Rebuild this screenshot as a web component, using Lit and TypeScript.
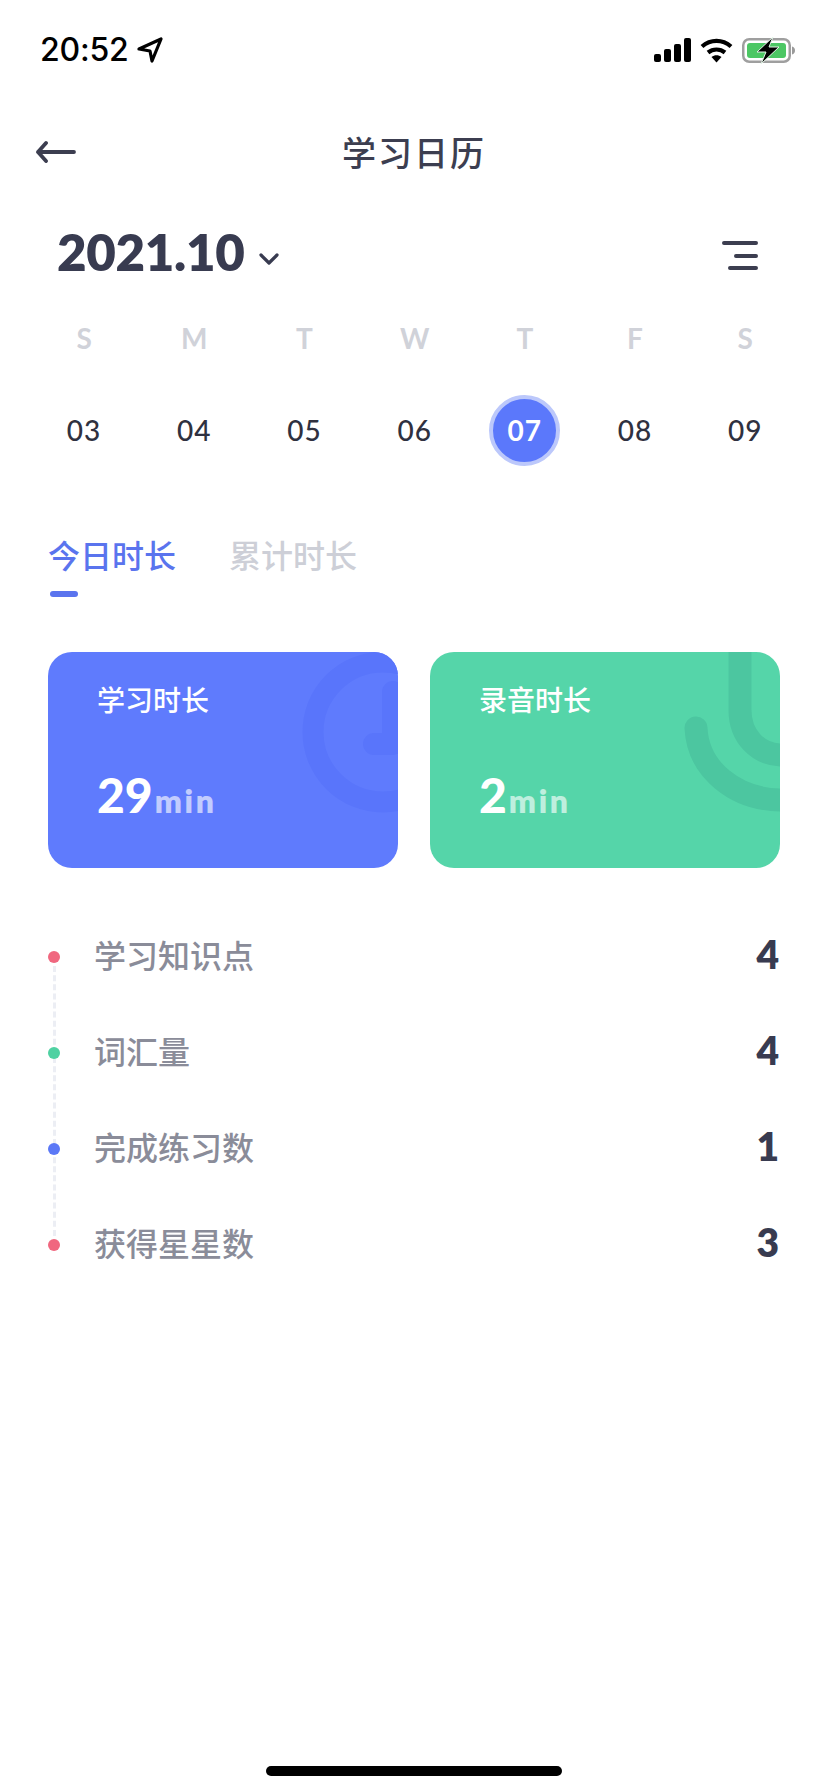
import { LitElement, html, css, svg } from "lit";
import { customElement } from "lit/decorators.js";

const WEEK = ["S", "M", "T", "W", "T", "F", "S"];
const DAYS = ["03", "04", "05", "06", "07", "08", "09"];
const STATS = [
  { label: "学习知识点", value: "4", color: "#f0677f" },
  { label: "词汇量", value: "4", color: "#4fd1a2" },
  { label: "完成练习数", value: "1", color: "#5b78f6" },
  { label: "获得星星数", value: "3", color: "#f0677f" },
];

@customElement("app-root")
export class AppRoot extends LitElement {
  static styles = css`
    :host {
      display: block;
      width: 828px;
      height: 1792px;
      background: #fff;
      font-family: "Lato", "Noto Sans CJK SC", sans-serif;
      color: #383b50;
    }
    .page { display: flex; flex-direction: column; height: 1792px; }
    .status { height: 100px; display: flex; align-items: flex-start; justify-content: space-between; padding: 28px 32px 0 40px; box-sizing: border-box; }
    .time { display: flex; align-items: center; gap: 8px; height: 44px; font: 500 32px/44px "Inter", sans-serif; color: #000; letter-spacing: -0.2px; }
    .sys { display: flex; align-items: center; gap: 9px; height: 44px; }
    svg { display: block; }
    .nav { height: 104px; display: flex; align-items: center; justify-content: center; position: relative; }
    .back { position: absolute; left: 35px; top: 39px; }
    .title { font: 500 34px/48px "Noto Sans CJK SC", sans-serif; letter-spacing: 2px; color: #3c3e50; }
    .month { height: 96px; display: flex; align-items: center; justify-content: space-between; padding: 0 70px 0 57px; }
    .month-left { display: flex; align-items: center; gap: 14px; }
    .chevron { margin-top: 14px; }
    .menu { margin-top: 8px; }
    .year { font: 800 51px/64px "Lato", sans-serif; color: #383b50; letter-spacing: -0.3px; }
    .grid { display: grid; grid-template-columns: repeat(7, 110.2px); padding-left: 29px; justify-items: center; align-items: center; }
    .week { height: 54px; margin-top: 11px; font: 700 28px/54px "Lato", sans-serif; color: #d0d2d9; }
    .days { height: 108px; margin-top: 11px; font: 500 28px/40px "Lato", sans-serif; color: #2f3140; letter-spacing: 1px; }
    .day { display: flex; align-items: center; justify-content: center; width: 71px; height: 71px; box-sizing: border-box; }
    .day.on { background: #5b78fb; border: 4px solid #bcc8fb; border-radius: 50%; color: #fff; font-weight: 700; }
    .tabs { display: flex; gap: 53px; padding: 0 0 0 48px; margin-top: 42px; }
    .tab { font: 500 32px/56px "Noto Sans CJK SC", sans-serif; color: #cdcfd7; letter-spacing: 0; }
    .tab.on { color: #5a74ee; }
    .bar { width: 28px; height: 6px; border-radius: 3px; background: #5a74ee; margin: 9px 0 0 2px; }
    .cards { display: flex; gap: 32px; padding: 0 48px; margin-top: 55px; }
    .card { position: relative; overflow: hidden; width: 350px; height: 216px; border-radius: 24px; padding: 27px 0 0 49px; box-sizing: border-box; color: #fff; }
    .card.blue { background: #5f7bfd; }
    .card.green { background: #55d5a9; }
    .deco { position: absolute; left: 0; top: 0; }
    .card-title { position: relative; font: 500 28px/40px "Noto Sans CJK SC", sans-serif; }
    .card-value { position: relative; display: flex; align-items: baseline; margin-top: 44px; font: 900 48px/64px "Lato", sans-serif; }
    .card-value span { font: 800 32px/40px "Lato", sans-serif; letter-spacing: 2.6px; opacity: 0.62; margin-left: 2px; }
    .stats { position: relative; margin-top: 41px; padding: 0 48px; }
    .line { position: absolute; left: 52.5px; top: 48px; height: 288px; width: 0; border-left: 3px dashed #eceef4; }
    .stat { position: relative; height: 96px; display: flex; align-items: center; }
    .dot { width: 12px; height: 12px; border-radius: 50%; margin-right: 34px; }
    .label { flex: 1; padding-bottom: 6px; font: 500 32px/48px "Noto Sans CJK SC", sans-serif; color: #8a8c99; }
    .value { padding-bottom: 6px; font: 800 39px/48px "Lato", sans-serif; color: #383b50; margin-right: 1px; }
    .home { width: 296px; height: 10px; border-radius: 5px; background: #000; margin: auto 0 16px 266px; }
  `;

  private signal() {
    return html`<svg width="38" height="24" viewBox="0 0 38 24">
      <rect x="1" y="16" width="7" height="8" rx="2"/>
      <rect x="11" y="11" width="7" height="13" rx="2"/>
      <rect x="21" y="6" width="7" height="18" rx="2"/>
      <rect x="31" y="0" width="7" height="24" rx="2"/>
    </svg>`;
  }

  private wifi() {
    return html`<svg width="33" height="25" viewBox="0 0 33 25" fill="none" stroke="#000" stroke-width="4.2">
      <path d="M2 8.5C10.500 1 22.500 1 31 8.500"/>
      <path d="M8 14.500C13 10.500 20 10.500 25 14.500"/>
      <path d="M11.500 19 L16.500 24.500 L21.500 19 C18.500 16.800 14.500 16.800 11.500 19Z" fill="#000" stroke="none"/>
    </svg>`;
  }

  private battery() {
    return html`<svg width="54" height="27" viewBox="0 0 54 27">
      <rect x="1.250" y="2.250" width="46.500" height="22.500" rx="6" fill="none" stroke="#9f9f9f" stroke-width="2.500"/>
      <rect x="5" y="6" width="39" height="15" rx="3" fill="#4cc764"/>
      <path d="M50 9.500c2 .5 3 2 3 4s-1 3.500-3 4z" fill="#9a9a9a"/>
      <path d="M31 0 L15 15 H24 L19 27 L37 10 H27 Z" fill="#000" stroke="#e4f5e8" stroke-width="1"/>
    </svg>`;
  }

  private clockDeco() {
    return svg`<g fill="none" stroke="#5975fb" stroke-linecap="round" stroke-linejoin="round">
      <circle cx="335" cy="80" r="70" stroke-width="21"/>
      <path d="M345 40 V92 H326" stroke-width="22"/>
    </g>`;
  }

  private micDeco() {
    return svg`<g fill="none" stroke="#4cc6a0" stroke-linecap="round">
      <path d="M266 76 C268 118 306 148 352 148" stroke-width="23"/>
      <path d="M310 -20 V58 C310 84 328 103 352 103" stroke-width="23"/>
    </g>`;
  }

  render() {
    return html`<div class="page">
      <div class="status">
        <div class="time">20:52
          <svg width="26" height="26" viewBox="0 0 26 26" fill="none" stroke="#000" stroke-width="3.2" stroke-linejoin="round"><path d="M2 12 L24 2 L15 24 L13 14 Z"/></svg>
        </div>
        <div class="sys">${this.signal()}${this.wifi()}${this.battery()}</div>
      </div>
      <div class="nav">
        <svg class="back" width="42" height="24" viewBox="0 0 42 24" fill="none" stroke="#3c3e50" stroke-linecap="round" stroke-linejoin="round"><path d="M3 13 H39 M11 4 L3 13 L11 22" stroke-width="3.800"/></svg>
        <div class="title">学习日历</div>
      </div>
      <div class="month">
        <div class="month-left">
          <div class="year">2021.10</div>
          <svg class="chevron" width="20" height="12" viewBox="0 0 20 12" fill="none" stroke="#383b50" stroke-width="3.200" stroke-linecap="round" stroke-linejoin="round"><path d="M2 2 L10 10 L18 2"/></svg>
        </div>
        <svg class="menu" width="36" height="30" viewBox="0 0 36 30" stroke="#3c3e50" stroke-width="4" stroke-linecap="round"><path d="M2 2 H34 M14 15 H34 M8 27 H34"/></svg>
      </div>
      <div class="grid week">${WEEK.map((d) => html`<div>${d}</div>`)}</div>
      <div class="grid days">${DAYS.map((d) => html`<div class="day ${d === "07" ? "on" : ""}">${d}</div>`)}</div>
      <div class="tabs">
        <div><div class="tab on">今日时长</div><div class="bar"></div></div>
        <div class="tab">累计时长</div>
      </div>
      <div class="cards">
        <div class="card blue">
          <svg class="deco" width="350" height="216" viewBox="0 0 350 216">${this.clockDeco()}</svg>
          <div class="card-title">学习时长</div>
          <div class="card-value">29<span>min</span></div>
        </div>
        <div class="card green">
          <svg class="deco" width="350" height="216" viewBox="0 0 350 216">${this.micDeco()}</svg>
          <div class="card-title">录音时长</div>
          <div class="card-value">2<span>min</span></div>
        </div>
      </div>
      <div class="stats">
        <div class="line"></div>
        ${STATS.map((s) => html`<div class="stat">
          <div class="dot" style="background:${s.color}"></div>
          <div class="label">${s.label}</div>
          <div class="value">${s.value}</div>
        </div>`)}
      </div>
      <div class="home"></div>
    </div>`;
  }
}
